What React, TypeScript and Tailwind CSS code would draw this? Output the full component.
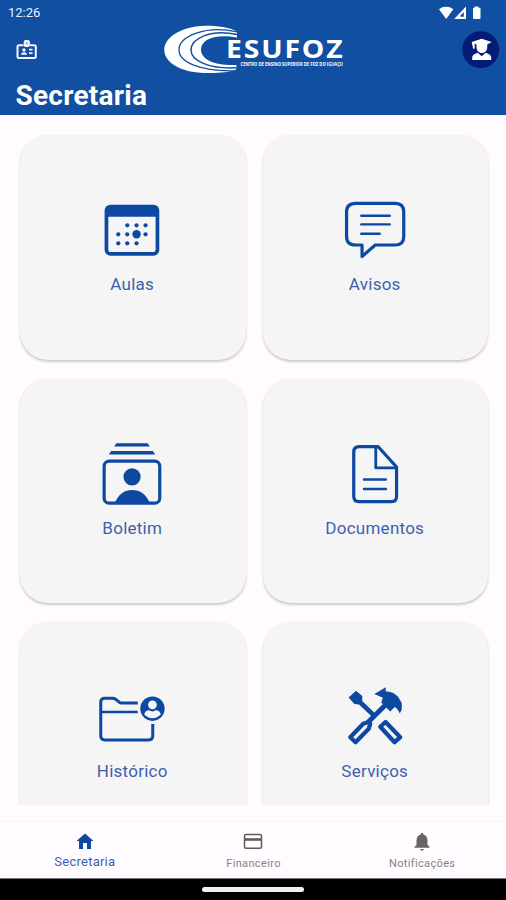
import type { ReactNode } from "react";

const BLUE = "#0d48a1";

function StatusIcons() {
  return (
    <svg width="44" height="16" viewBox="438 4 44 16" fill="#fff">
      <path d="M439 8.3 C443 5 449 5 453.300 8.300 L446.200 18Z" />
      <path d="M466 5.500V18H454.200Z" />
      <path d="M463.800 11V15.800H460.500V14.500Z" fill="#104fa2" />
      <path d="M474.600 5.500h3.800v1.200h1.200q.9 0 .9.9V17q0 1-.9 1h-5.600q-1 0-1-1V7.600q0-.9 1-.9h.6Z" />
    </svg>
  );
}

function BadgeIcon() {
  return (
    <svg width="22" height="22" viewBox="16 39 22 22" fill="none" stroke="#f3f4ff">
      <path d="M23.500 45.300H19q-1.500 0-1.500 1.500V56.500q0 1.500 1.500 1.500H34.300q1.500 0 1.500-1.500V46.800q0-1.500-1.500-1.500H30" strokeWidth="2" />
      <rect x="24.300" y="40.500" width="5" height="6" rx="1.500" fill="#f3f4ff" strokeWidth="1.200" />
      <circle cx="26.800" cy="43.200" r=".7" fill={BLUE} stroke="none" />
      <g fill="#f3f4ff" stroke="none">
        <circle cx="24" cy="50" r="1.700" />
        <path d="M21 54.800q0-2.600 3-2.600t3 2.600Z" />
        <path d="M29 48.800h3.500v1.700H29zM29 52.200h3.500v1.700H29z" />
      </g>
    </svg>
  );
}

function Logo() {
  return (
    <svg width="184" height="52" viewBox="162 24 184 52" className="overflow-visible">
      <path
        d="M237 31.500C226 26 208 25 196 26.500C175 30 164.300 40 164.300 50C164.300 62 180 72.500 205 73C218 73.300 229 72.500 236 69.500L236.500 65C216 66 201 60 201 49.500C201 40 214 33.500 237 37.500Z"
        fill="#fff"
      />
      <g fill="none" stroke="#104fa2">
        <path d="M237 31.800C206 25 179 36 179 50C179 62 200 71.500 234 70.800" strokeWidth="1.300" />
        <path d="M237 34.500C210 28.500 191 39 191 50C191 60 207 69 236 67.800" strokeWidth="1.500" />
      </g>
      <text
        x="226"
        y="57.800"
        textLength="118.500"
        lengthAdjust="spacingAndGlyphs"
        className="fill-white font-['Open_Sans',sans-serif] text-[24.500px] font-bold tracking-[1.600px]"
      >
        ESUFOZ
      </text>
      <text
        x="240.500"
        y="65.500"
        textLength="102.500"
        lengthAdjust="spacingAndGlyphs"
        className="fill-white font-['Open_Sans',sans-serif] text-[5.500px] font-bold"
      >
        CENTRO DE ENSINO SUPERIOR DE FOZ DO IGUAÇU
      </text>
    </svg>
  );
}

function Avatar() {
  return (
    <svg width="38" height="38" viewBox="461.800 31 38 38">
      <circle cx="480.500" cy="49.700" r="18.500" fill="#031d77" />
      <g fill="#fff">
        <path d="M471.500 42 L481.500 38.700 L491.500 42 L487 44.500V47C487 50.500 485 53 481.700 53S476.300 50.500 476.300 47V44.500L474.500 43.500V48.500L473 49Z" />
        <path d="M472 60V57.500Q472 54.500 477.500 52.800L481.500 56.300L485.500 52.800Q491 54.500 491 57.500V60Z" />
      </g>
    </svg>
  );
}

function CardIcon({ box, children }: { box: string; children: ReactNode }) {
  return (
    <svg
      width="68"
      height="68"
      viewBox={box}
      fill="none"
      stroke={BLUE}
      strokeWidth="3.200"
      strokeLinejoin="round"
      strokeLinecap="round"
    >
      {children}
    </svg>
  );
}

const CALENDAR_DOTS = [
  [127, 225.3], [136.3, 225.3], [145.3, 225.3],
  [118, 234.3], [127, 234.3], [145.3, 234.3],
  [118, 243.3], [127, 243.3], [136.3, 243.3],
];

const aulas = (
  <CardIcon box="98.750 196 68 68">
    <rect x="106.200" y="206.500" width="51" height="47.400" rx="4" strokeWidth="3.700" />
    <path d="M106.200 216.700V209q0-3 3-3H154.200q3 0 3 3V216.700Z" fill={BLUE} stroke="none" />
    <g fill={BLUE} stroke="none">
      {CALENDAR_DOTS.map(([x, y]) => (
        <circle key={`${x}-${y}`} cx={x} cy={y} r="2.100" />
      ))}
      <circle cx="136.300" cy="234.300" r="4.200" />
    </g>
  </CardIcon>
);

const avisos = (
  <CardIcon box="341.250 196 68 68">
    <path d="M356 203.300H395.500Q404 203.300 404 212V236.500Q404 245 395.500 245H375.500L362.300 256.500V245H356Q346.800 245 346.800 236.500V212Q346.800 203.300 356 203.300Z" />
    <path d="M361.500 215.700H390M361.500 224.400H390M361.500 233.700H380" strokeWidth="2.400" />
  </CardIcon>
);

const boletim = (
  <CardIcon box="98.750 439.500 68 68">
    <path d="M116 442.800H147.500L149.500 446H114Z M111 450.500H152.500L155 454H108.500Z" fill={BLUE} stroke="none" />
    <rect x="103.900" y="460.700" width="55.600" height="42" rx="5" />
    <circle cx="131.800" cy="476.300" r="8.600" fill={BLUE} stroke="none" />
    <path d="M114.500 502.500Q120 489.500 132 489.500T149.500 502.500Z" fill={BLUE} stroke="none" />
  </CardIcon>
);

const documentos = (
  <CardIcon box="341.250 439.500 68 68">
    <path d="M359.500 446.200H378.500L396.800 466.500V496Q396.800 501.200 391.600 501.200H359.500Q354 501.200 354 496V451.400Q354 446.200 359.500 446.200Z" />
    <path d="M376 447V467.300H396.500" strokeWidth="2.800" />
    <path d="M364.300 479H386M364.300 488.500H386" strokeWidth="2.600" />
  </CardIcon>
);

const historico = (
  <CardIcon box="98.750 683 68 68">
    <path
      d="M137.500 703H121Q119.500 703 118 701.300L115.500 699.300Q114 698.200 112 698.200H104.500Q100.500 698.200 100.500 702.200V735.800Q100.500 740 104.700 740H148.300Q152.500 740 152.500 735.800V724"
      strokeWidth="3"
      strokeLinecap="butt"
    />
    <path d="M101 712H137.500" strokeWidth="2.600" strokeLinecap="butt" />
    <circle cx="152.200" cy="708.700" r="12.200" fill={BLUE} stroke="none" />
    <circle cx="152.200" cy="704.800" r="4.400" fill="#f5f5f5" stroke="none" />
    <path d="M144 714.500Q145 710.300 149 710.300Q152.300 712.500 155.500 710.300Q159.500 710.300 160.500 714.500Q157 718.200 152.300 718.200T144 714.500Z" fill="#f5f5f5" stroke="none" />
  </CardIcon>
);

const servicos = (
  <CardIcon box="341.250 683 68 68">
    <g fill={BLUE} stroke="none">
      <path d="M348.800 697.500L356.300 690.800L362.500 696V701L376 714L373 717.500L359.300 704.500L354.800 704Z" />
      <path d="M374.500 694L386 687.300V699Z" />
      <path d="M385.500 691.200Q394 691.500 398.500 697L402 703V709.500L400 713.500Q398 708.500 395 707L390.500 711.500L381.500 702.500L383 698Z" />
    </g>
    <path d="M369 721.500L387 703.800" strokeWidth="5" />
    <path d="M350.500 737.300L363.500 723.700L368.700 722L370.500 723.800L369 728.700L355.800 742.200Z" strokeWidth="4.200" />
    <path d="M380.500 726.800L385.800 722L400.500 737.200L394.800 742.200Z" strokeWidth="4.200" />
  </CardIcon>
);

const CARDS: { label: string; icon: ReactNode }[] = [
  { label: "Aulas", icon: aulas },
  { label: "Avisos", icon: avisos },
  { label: "Boletim", icon: boletim },
  { label: "Documentos", icon: documentos },
  { label: "Histórico", icon: historico },
  { label: "Serviços", icon: servicos },
];

function Card({ label, icon }: { label: string; icon: ReactNode }) {
  return (
    <button className="flex h-[224.500px] flex-col items-center rounded-[28px] bg-[#f5f5f5] pt-[61px] shadow-[0_1.500px_2.500px_rgba(0,0,0,0.2)]">
      {icon}
      <span className="mt-[9px] pr-px text-[17px] leading-[22px] tracking-[0.250px] text-[#3e5fae]">{label}</span>
    </button>
  );
}

export default function App() {
  return (
    <div className="flex h-[900px] w-[506px] flex-col overflow-hidden bg-[#fffbff] font-['Roboto',sans-serif]">
      <header className="h-[115px] shrink-0 bg-[#104fa2] text-white">
        <div className="flex h-6 items-center justify-between pt-px pr-6 pl-2">
          <span className="text-[13px] leading-4 text-[#e8eefb]">12:26</span>
          <StatusIcons />
        </div>
        <div className="flex h-[52px] items-center justify-between pr-[6.500px] pl-4">
          <div className="flex w-[146px] items-center">
            <BadgeIcon />
          </div>
          <Logo />
          <div className="flex flex-1 justify-end">
            <Avatar />
          </div>
        </div>
        <h1 className="pt-[3px] pl-[15.500px] text-[28px] leading-[34px] font-bold tracking-[0.250px]">Secretaria</h1>
      </header>

      <main className="mt-[19px] h-[671px] shrink-0 overflow-hidden px-[18px]">
        <div className="grid grid-cols-2 gap-x-[17px] gap-y-[19px] pt-px pl-[2px]">
          {CARDS.map((card) => (
            <Card key={card.label} label={card.label} icon={card.icon} />
          ))}
        </div>
      </main>

      <nav className="mt-4 grid h-[57px] shrink-0 grid-cols-3 border-t border-[#f9f4f9] text-[#858287]">
        <div className="flex flex-col items-center pt-[9px] pl-px text-[#3e62b2]">
          <svg width="22" height="20" viewBox="74 831 22 20" fill={BLUE}>
            <path d="M85 833.500L93.500 841H91V849H87V843H83V849H79V841H76.500Z" />
          </svg>
          <span className="mt-[3px] text-[13px] leading-4 tracking-[0.250px]">Secretaria</span>
        </div>
        <div className="flex flex-col items-center pt-[9px] pl-px">
          <svg width="22" height="20" viewBox="242.500 831 22 20" fill="none" stroke="#5c5c5e" strokeWidth="1.500">
            <rect x="245" y="834.500" width="17" height="13.800" rx="1.500" />
            <path d="M245 839.500H262" strokeWidth="2.600" />
          </svg>
          <span className="mt-[5px] text-[11px] leading-4 tracking-[0.350px]">Financeiro</span>
        </div>
        <div className="flex flex-col items-center pt-[9px] pl-px">
          <svg width="22" height="20" viewBox="411.500 831 22 20" fill="#666467">
            <path d="M421.300 833H423.700V834.500Q428 835.700 428 840.500V845L430 846.800V847.800H415V846.800L417 845V840.500Q417 835.700 421.300 834.500Z" />
            <path d="M420.600 849H424.400Q424 850.800 422.500 850.800T420.600 849Z" />
          </svg>
          <span className="mt-[5px] text-[11px] leading-4 tracking-[0.350px]">Notificações</span>
        </div>
      </nav>

      <footer className="flex flex-1 items-center justify-center border-t border-[#77757a] bg-black">
        <div className="h-[5px] w-[102px] rounded-full bg-[#f0f0f0]" />
      </footer>
    </div>
  );
}
